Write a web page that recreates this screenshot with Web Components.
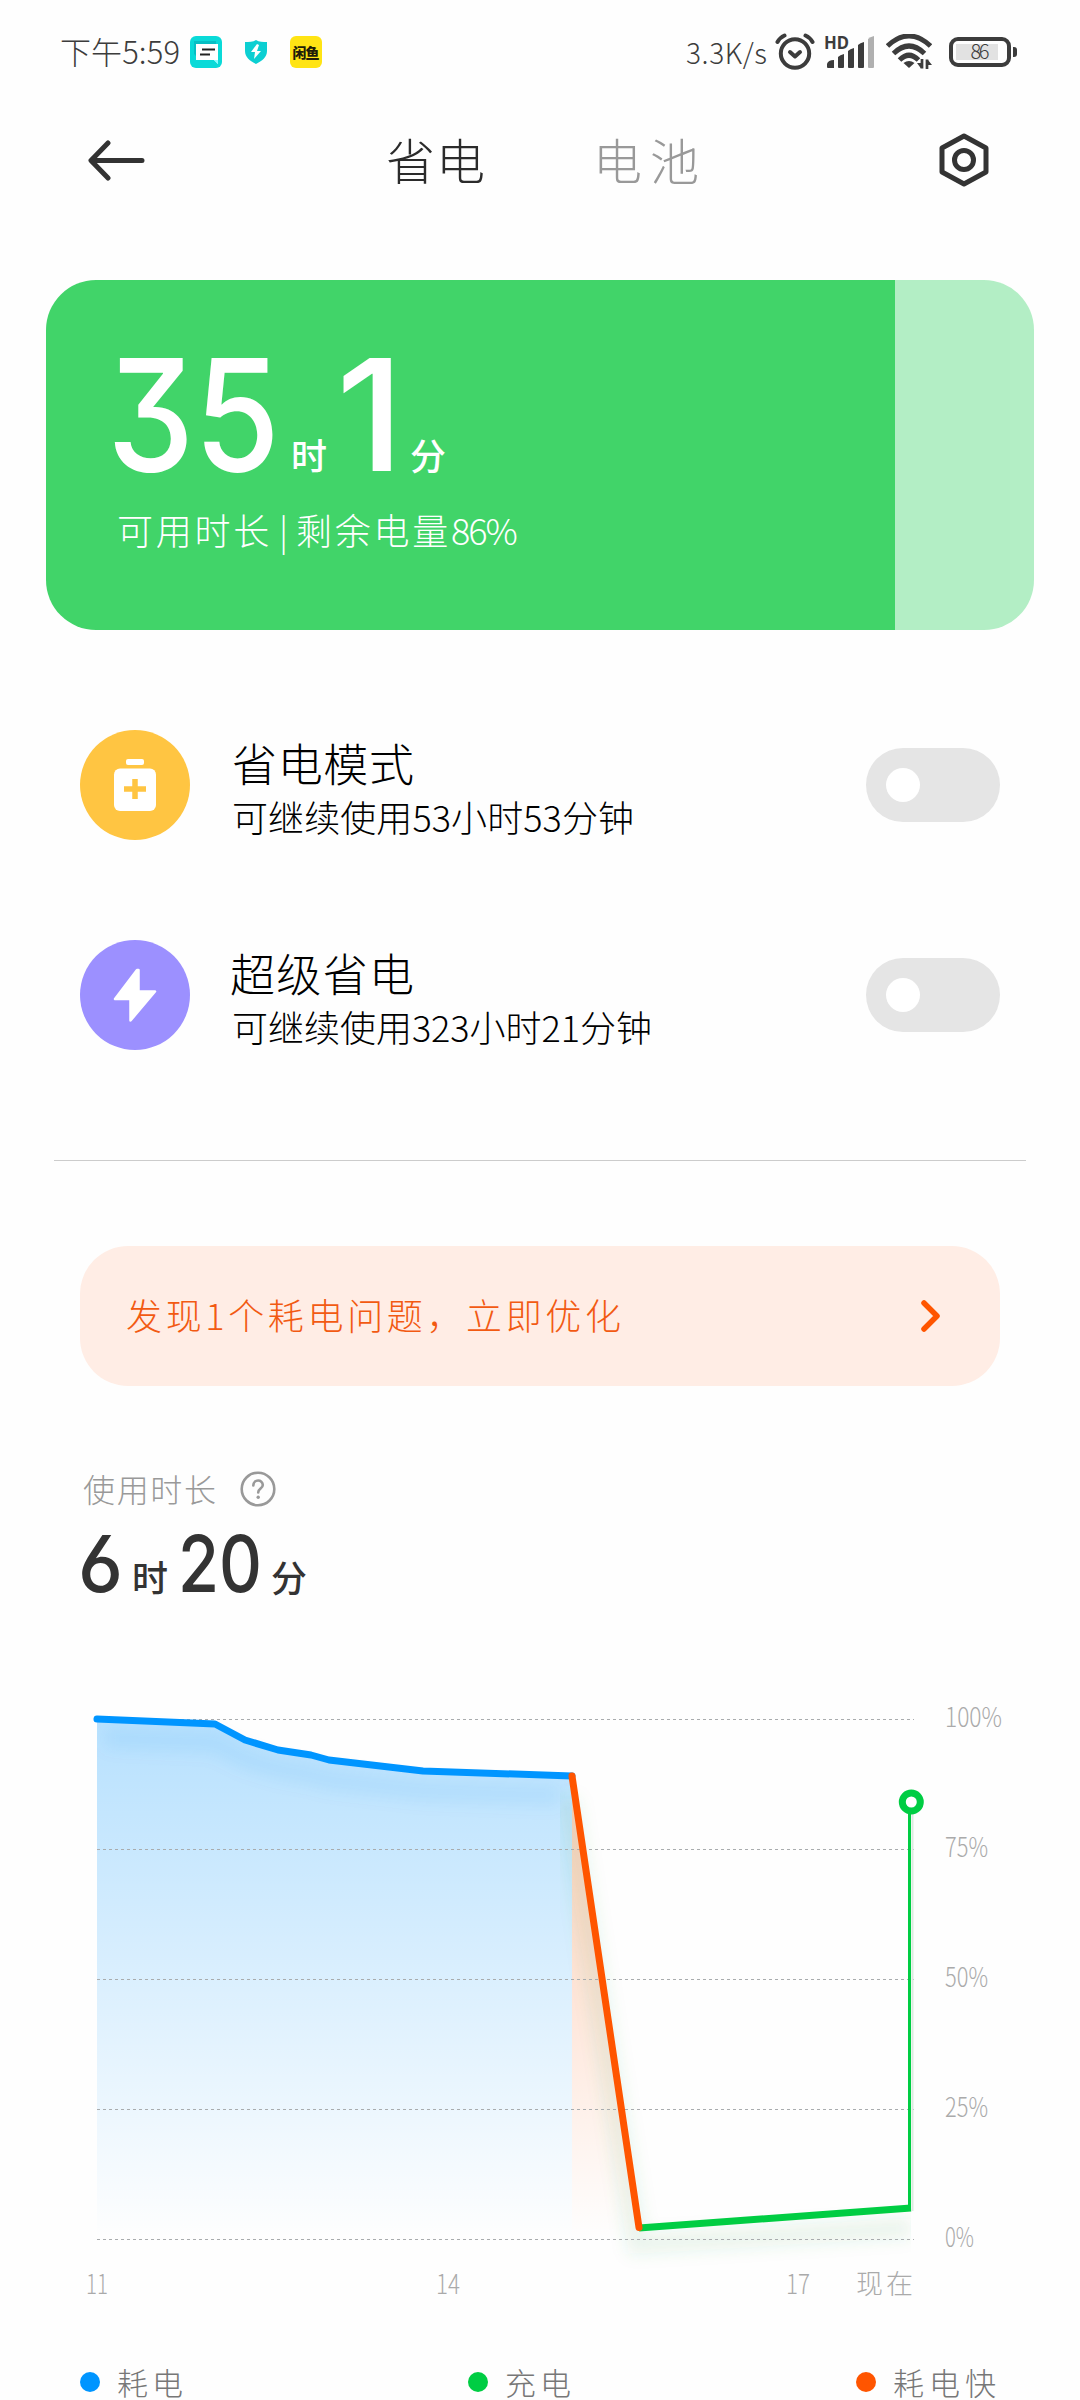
<!DOCTYPE html>
<html lang="zh-CN">
<head>
<meta charset="utf-8">
<title>省电</title>
<style>
html,body{margin:0;background:#fefefe}
body{width:1080px;height:2400px;overflow:hidden;font-family:"Noto Sans CJK SC","Noto Sans",sans-serif;font-weight:300;color:#000}
</style>
</head>
<body>
<battery-page></battery-page>
<script>
const define=(name,html,setup)=>{
  const t=document.createElement('template');
  t.innerHTML=html;
  customElements.define(name,class extends HTMLElement{
    connectedCallback(){
      if(this.shadowRoot)return;
      this.attachShadow({mode:'open'}).append(t.content.cloneNode(true));
      if(setup)setup(this,this.shadowRoot);
    }
  });
};

/* A single line of text set to an exact width: by tracking, or by horizontal scale with the "stretch" attribute. */
define('fit-text',`<style>
:host{display:block;white-space:nowrap;flex:none}
span{display:inline-block;white-space:nowrap;transform-origin:0 50%;position:relative}
</style><span><slot></slot></span>`,(el,root)=>{
  const s=root.querySelector('span'),w=+el.getAttribute('w'),size=+el.getAttribute('size');
  el.style.fontSize=size+'px';
  el.style.lineHeight=(el.getAttribute('lh')||size)+'px';
  el.style.width=w+'px';
  s.style.top=(el.getAttribute('dy')||0)+'px';
  const n=[...el.textContent].length;
  if(el.hasAttribute('stretch')){
    s.style.transform='scaleX('+w/s.getBoundingClientRect().width+')';
    return;
  }
  let ls=0;
  for(let i=0;i<5;i++){
    ls+=(w+(n>1?ls:0)-s.getBoundingClientRect().width)/Math.max(1,n-1);
    s.style.letterSpacing=ls+'px';
  }
});

define('status-bar',`<style>
:host{display:flex;height:104px;padding:0 63px 0 60px;align-items:center;justify-content:space-between;box-sizing:border-box;color:#3c3c3c}
div{display:flex;align-items:center}
svg{display:block;flex:none}
.fish{width:32px;height:32px;border-radius:6px;background:#ffe414;color:#221d08;font-weight:900;margin-left:23px;justify-content:center}
.batt{width:54px;height:22px;border:4px solid #3c3c3c;border-radius:9px;justify-content:center;margin-left:15px;background:linear-gradient(#e2e2e2,#e2e2e2) 3px 3px/42px 16px no-repeat;}
.nub{width:4px;height:10px;border-radius:0 3px 3px 0;background:#3c3c3c;margin-left:2px}
</style>
<div><fit-text size="31" w="120" dy="-2">下午5:59</fit-text>
<svg style="margin-left:10px" width="32" height="32" viewBox="0 0 32 32"><rect width="32" height="32" rx="6" fill="#0adad8"/><path d="M4 5h22v3H7v13L4 18z" fill="#07bfc4"/><path d="M6 8h22v20l-4-4H6z" fill="#fff"/><path d="M24 24h4v4z" fill="#8ff"/><path d="M12 13.5h13M10 18.5h10" stroke="#222" stroke-width="2"/></svg>
<svg style="margin-left:23px" width="22" height="24" viewBox="0 0 22 24"><path d="M11 0C8 2 4 2 0 2v9c0 6 5 10 11 13 6-3 11-7 11-13V2C18 2 14 2 11 0z" fill="#0ccfd2"/><path d="M12 4l-6 8h4l-1 7 7-8h-4l2-6z" fill="#fff"/></svg>
<div class="fish"><fit-text size="14" w="27">闲鱼</fit-text></div></div>
<div><fit-text size="28" w="81">3.3K/s</fit-text>
<svg style="margin-left:8px" width="40" height="38" viewBox="0 0 40 38"><g fill="none" stroke="#3c3c3c" stroke-width="4" stroke-linecap="round"><circle cx="20" cy="20.5" r="14.2"/><path d="M2.5 9Q5 4.5 9.500 2.500M37.500 9Q35 4.500 30.500 2.500"/><path d="M15 19l5 4.500 5-4.500" stroke-linejoin="round"/></g></svg>
<svg style="margin-left:9px;overflow:visible" width="52" height="36" viewBox="0 0 52 36"><text x="0" y="15" textLength="25" lengthAdjust="spacingAndGlyphs" font-family="Noto Sans" font-size="17" font-weight="700" fill="#3c3c3c">HD</text><g fill="#3c3c3c"><path d="M3 30q1-4 7-4v8H4q-1 0-1-1zM14 23q2-2 6-3v13q0 1-1 1h-4q-1 0-1-1zM24 17q2-2 6-3v19q0 1-1 1h-4q-1 0-1-1zM34 11q2-2 6-3v25q0 1-1 1h-4q-1 0-1-1z"/><path d="M44 5q2-2 6-3v31q0 1-1 1h-4q-1 0-1-1z" fill="#b0b0b0"/></g></svg>
<svg style="margin-left:10px;margin-right:2px" width="46" height="36" viewBox="0 0 46 36"><g fill="none" stroke="#3c3c3c" stroke-width="5"><path d="M1.500 12Q23-8 44.500 12M7.500 19.500Q23 4.500 38.500 19.500M13.500 26Q23 16.500 32.500 26"/></g><path d="M17.500 29Q23 25 28.500 29L23 34z" fill="#3c3c3c"/><path d="M36 25v9.500M41 35v-9.500" stroke="#3c3c3c" stroke-width="2.700"/><path d="M31 29h4v5.500zM42 26l4 5h-4z" fill="#3c3c3c"/></svg>
<div class="batt"><fit-text size="20" w="19" lh="22" dy="-1">86</fit-text></div><div class="nub"></div></div>`);

define('title-bar',`<style>
:host{display:grid;grid-template-columns:298px 207px 1fr auto;height:112px;align-items:center;padding:0 91px 0 88px;color:#2b2b2b}
svg{display:block}.off{color:#999}
</style>
<svg width="58" height="44" viewBox="0 0 58 44" fill="none" stroke="#333" stroke-width="5" stroke-linecap="round" stroke-linejoin="round"><path d="M20 5L3 22.500 20 40M3.500 22.500H54"/></svg>
<fit-text size="49" w="99" dy="-2">省电</fit-text><fit-text class="off" size="49" w="106" dy="-2">电池</fit-text>
<svg width="50" height="54" viewBox="0 0 50 54" fill="none" stroke="#333" stroke-width="5" stroke-linejoin="round"><path d="M25 3L47 15v24L25 51 3 39V15z"/><circle cx="25" cy="27" r="9.500"/></svg>`);

/* Duration made of large numerals with small units; the sizes come from attributes of the children. */
define('time-span',`<style>
:host{display:flex;align-items:flex-end}
::slotted(.n){font-family:Inter,"Noto Sans",sans-serif;font-feature-settings:"cv09","ss01","cv03","cv04"}
::slotted(.u){font-weight:500}
</style><slot></slot>`);

define('charge-card',`<style>
:host{display:flex;flex-direction:column;height:350px;box-sizing:border-box;margin:64px 46px 0;padding:58px 0 0 61px;border-radius:50px;background:linear-gradient(90deg,#41d469 849.500px,#b3eec5 849.500px);color:#fff}
.sub{margin:17px 0 0 10px}
</style>
<time-span><fit-text stretch class="n" style="font-weight:500" size="155" lh="150" dy="2" w="173">35</fit-text><fit-text class="u" style="margin:0 0 13px 11px" size="36" w="36" dy="-3">时</fit-text><fit-text stretch class="n" style="margin-left:9px;font-weight:500" size="155" lh="150" dy="2" w="68">1</fit-text><fit-text class="u" style="margin:0 0 13px 6px" size="36" w="36" dy="-3">分</fit-text></time-span>
<fit-text class="sub" size="36" w="396" lh="50" dy="-1">可用时长<b style="font-weight:300;margin:0 5px 0 7px">|</b>剩余电量<b style="font-weight:300;letter-spacing:-2px">86%</b></fit-text>`);

define('toggle-switch',`<style>
:host{display:flex;align-items:center;width:134px;height:74px;border-radius:37px;background:#e5e5e5;padding-left:20px;box-sizing:border-box}
i{width:34px;height:34px;border-radius:50%;background:#fff}
</style><i></i>`);

define('mode-row',`<style>
:host{display:flex;height:210px;align-items:center;padding:0 80px}
.ic{width:110px;height:110px;border-radius:50%;background:var(--tone);flex:none}
.tx{flex:1;padding:8px 0 0 42px}
</style><div class="ic"><slot name="icon"></slot></div><div class="tx"><slot></slot></div><toggle-switch></toggle-switch>`);

define('issue-banner',`<style>
:host{display:flex;align-items:center;justify-content:space-between;height:140px;margin:85px 80px 0;padding:0 59px 0 46px;box-sizing:border-box;border-radius:48px;background:#ffede5;color:#f25a12}
svg{display:block}
</style><slot></slot><svg width="21" height="34" viewBox="0 0 21 34" fill="none" stroke="#ff5500" stroke-width="5.500" stroke-linecap="round" stroke-linejoin="round"><path d="M4 4l13 13L4 30"/></svg>`);

define('usage-summary',`<style>
:host{display:block;padding:80px 80px 0;color:#333}
.l{display:flex;height:46px;align-items:center;color:#999;padding-left:3px}
svg{display:block;margin-left:24px}
time-span{margin-top:11px}
</style>
<div class="l"><fit-text size="32" w="133" dy="-1">使用时长</fit-text><svg width="36" height="36" viewBox="0 0 36 36" fill="none" stroke="#999" stroke-width="2.600"><circle cx="18" cy="18" r="16.300"/><path d="M13.300 14.500c0-6.500 9.500-6.500 9.500-.5 0 3.600-4.600 3.600-4.600 7.500" stroke-linecap="round"/><circle cx="18.200" cy="26.300" r="1.700" fill="#999" stroke="none"/></svg></div>
<time-span><fit-text stretch class="n" style="font-weight:500;margin-left:-2px" size="79" lh="78" dy="1" w="45">6</fit-text><fit-text class="u" style="margin:0 0 3px 9px" size="36" w="36" dy="-4">时</fit-text><fit-text stretch class="n" style="margin-left:10px;font-weight:500" size="79" lh="78" dy="1" w="84">20</fit-text><fit-text class="u" style="margin:0 0 3px 9px" size="36" w="36" dy="-4">分</fit-text></time-span>`);

define('battery-chart',`<style>
:host{display:block;height:620px}
svg{display:block;font-family:"Noto Sans CJK SC",sans-serif;font-weight:300}
</style>
<svg width="1080" height="620" viewBox="0 1690 1080 620">
<defs>
<linearGradient id="b" gradientUnits="userSpaceOnUse" x1="0" y1="1719" x2="0" y2="2239"><stop stop-color="#0095ff" stop-opacity=".28"/><stop offset="1" stop-color="#0095ff" stop-opacity="0"/></linearGradient>
<linearGradient id="o" gradientUnits="userSpaceOnUse" x1="0" y1="1776" x2="0" y2="2239"><stop stop-color="#ff5500" stop-opacity=".28"/><stop offset="1" stop-color="#ff5500" stop-opacity="0"/></linearGradient>
<filter id="s" filterUnits="userSpaceOnUse" x="60" y="1690" width="900" height="600"><feGaussianBlur stdDeviation="8"/></filter>
<clipPath id="c"><path d="M97 1690H911V2310H97z"/></clipPath>
<clipPath id="g"><path d="M560 1770H911V2300H560z"/></clipPath>
</defs>
<path d="M97 1719L215 1724 245 1740 278 1750 311 1755 329 1760 423 1771 572 1776V2239H97z" fill="url(#b)"/>
<path d="M572 1776L639 2228V2239H572z" fill="url(#o)"/>
<g fill="none" stroke-width="20">
<g clip-path="url(#c)"><path filter="url(#s)" d="M105 1738L215 1743 245 1759 278 1769 311 1775 329 1780 423 1791 560 1796" stroke="#0a8ee8" stroke-opacity=".08"/></g>
<path clip-path="url(#g)" filter="url(#s)" d="M568 1798L637 2244 911 2228" stroke="#2b9b48" stroke-opacity=".1"/>
</g>
<path d="M97 1719.500H914M97 1849.500H914M97 1979.500H914M97 2109.500H914M97 2239.500H914" stroke="#a9acae" stroke-dasharray="3 3"/>
<g fill="none" stroke-width="7" stroke-linejoin="round">
<path d="M97 1719L215 1724 245 1740 278 1750 311 1755 329 1760 423 1771 572 1776" stroke="#0095ff" stroke-linecap="round"/>
<path d="M639 2228L911 2208" stroke="#00cd43"/>
<path d="M909.500 2210V1802" stroke="#00cd43" stroke-width="3"/><path d="M912.500 2211V1812" stroke="#dcebe0" stroke-width="2"/>
<path d="M572 1776L639 2227.500" stroke="#ff5500" stroke-linecap="round"/>
<circle cx="911.300" cy="1802" r="9" fill="#fff" stroke="#00cd43"/>
</g>
<g font-size="27" fill="#aaa">
<text x="945" y="1727" textLength="57" lengthAdjust="spacingAndGlyphs">100%</text><text x="945" y="1857" textLength="43" lengthAdjust="spacingAndGlyphs">75%</text><text x="945" y="1987" textLength="43" lengthAdjust="spacingAndGlyphs">50%</text><text x="945" y="2117" textLength="43" lengthAdjust="spacingAndGlyphs">25%</text><text x="945" y="2247" textLength="29" lengthAdjust="spacingAndGlyphs">0%</text>
<text x="86" y="2294" textLength="22" lengthAdjust="spacingAndGlyphs">11</text><text x="436" y="2294" textLength="24" lengthAdjust="spacingAndGlyphs">14</text><text x="786" y="2294" textLength="24" lengthAdjust="spacingAndGlyphs">17</text><text x="856" y="2294" textLength="57">现在</text>
</g></svg>`);

define('legend-item',`<style>
:host{display:flex;align-items:center}
i{width:20px;height:20px;border-radius:50%;background:var(--dot);margin-right:17px}
</style><i></i><slot></slot>`);

define('chart-legend',`<style>
:host{display:grid;grid-template-columns:388px 388px 1fr;height:40px;margin-top:52px;padding-left:80px;color:#777}
</style>
<legend-item style="--dot:#0095ff"><fit-text size="31" w="66" dy="-1">耗电</fit-text></legend-item>
<legend-item style="--dot:#00cd43"><fit-text size="31" w="66" dy="-1">充电</fit-text></legend-item>
<legend-item style="--dot:#ff5500"><fit-text size="31" w="103" dy="-1">耗电快</fit-text></legend-item>`);

define('battery-page',`<style>
:host{display:block;width:1080px;height:2400px;overflow:hidden}
.modes{padding-top:50px}
hr{margin:60px 54px 0;border:0;height:1px;background:#ccc}
.s{margin-top:3px}
</style>
<status-bar></status-bar><title-bar></title-bar><charge-card></charge-card>
<div class="modes">
<mode-row style="--tone:#ffc542"><svg slot="icon" width="110" height="110" viewBox="0 0 110 110"><g fill="#fff"><rect x="46" y="29" width="18" height="6" rx="2"/><rect x="34" y="38.500" width="42" height="42.500" rx="6"/></g><path d="M55 49v20M44 59h22" stroke="#ffc542" stroke-width="5.500"/></svg>
<fit-text size="45" w="182" lh="50">省电模式</fit-text><fit-text class="s" size="36" w="402" lh="50">可继续使用53小时53分钟</fit-text></mode-row>
<mode-row style="--tone:#9c90ff"><svg slot="icon" width="110" height="110" viewBox="0 0 110 110"><path d="M57 30L35 59h15.500v21.500L75 51.500H58.500V30z" fill="#fff" stroke="#fff" stroke-width="2.500" stroke-linejoin="round"/></svg>
<fit-text size="45" w="184" lh="50" style="margin-left:-2px">超级省电</fit-text><fit-text class="s" size="36" w="420" lh="50">可继续使用323小时21分钟</fit-text></mode-row>
</div>
<hr>
<issue-banner><fit-text size="36" w="495" dy="-2">发现1个耗电问题，立即优化</fit-text></issue-banner>
<usage-summary></usage-summary>
<battery-chart style="margin-top:89px"></battery-chart>
<chart-legend></chart-legend>`);
</script>
</body>
</html>
